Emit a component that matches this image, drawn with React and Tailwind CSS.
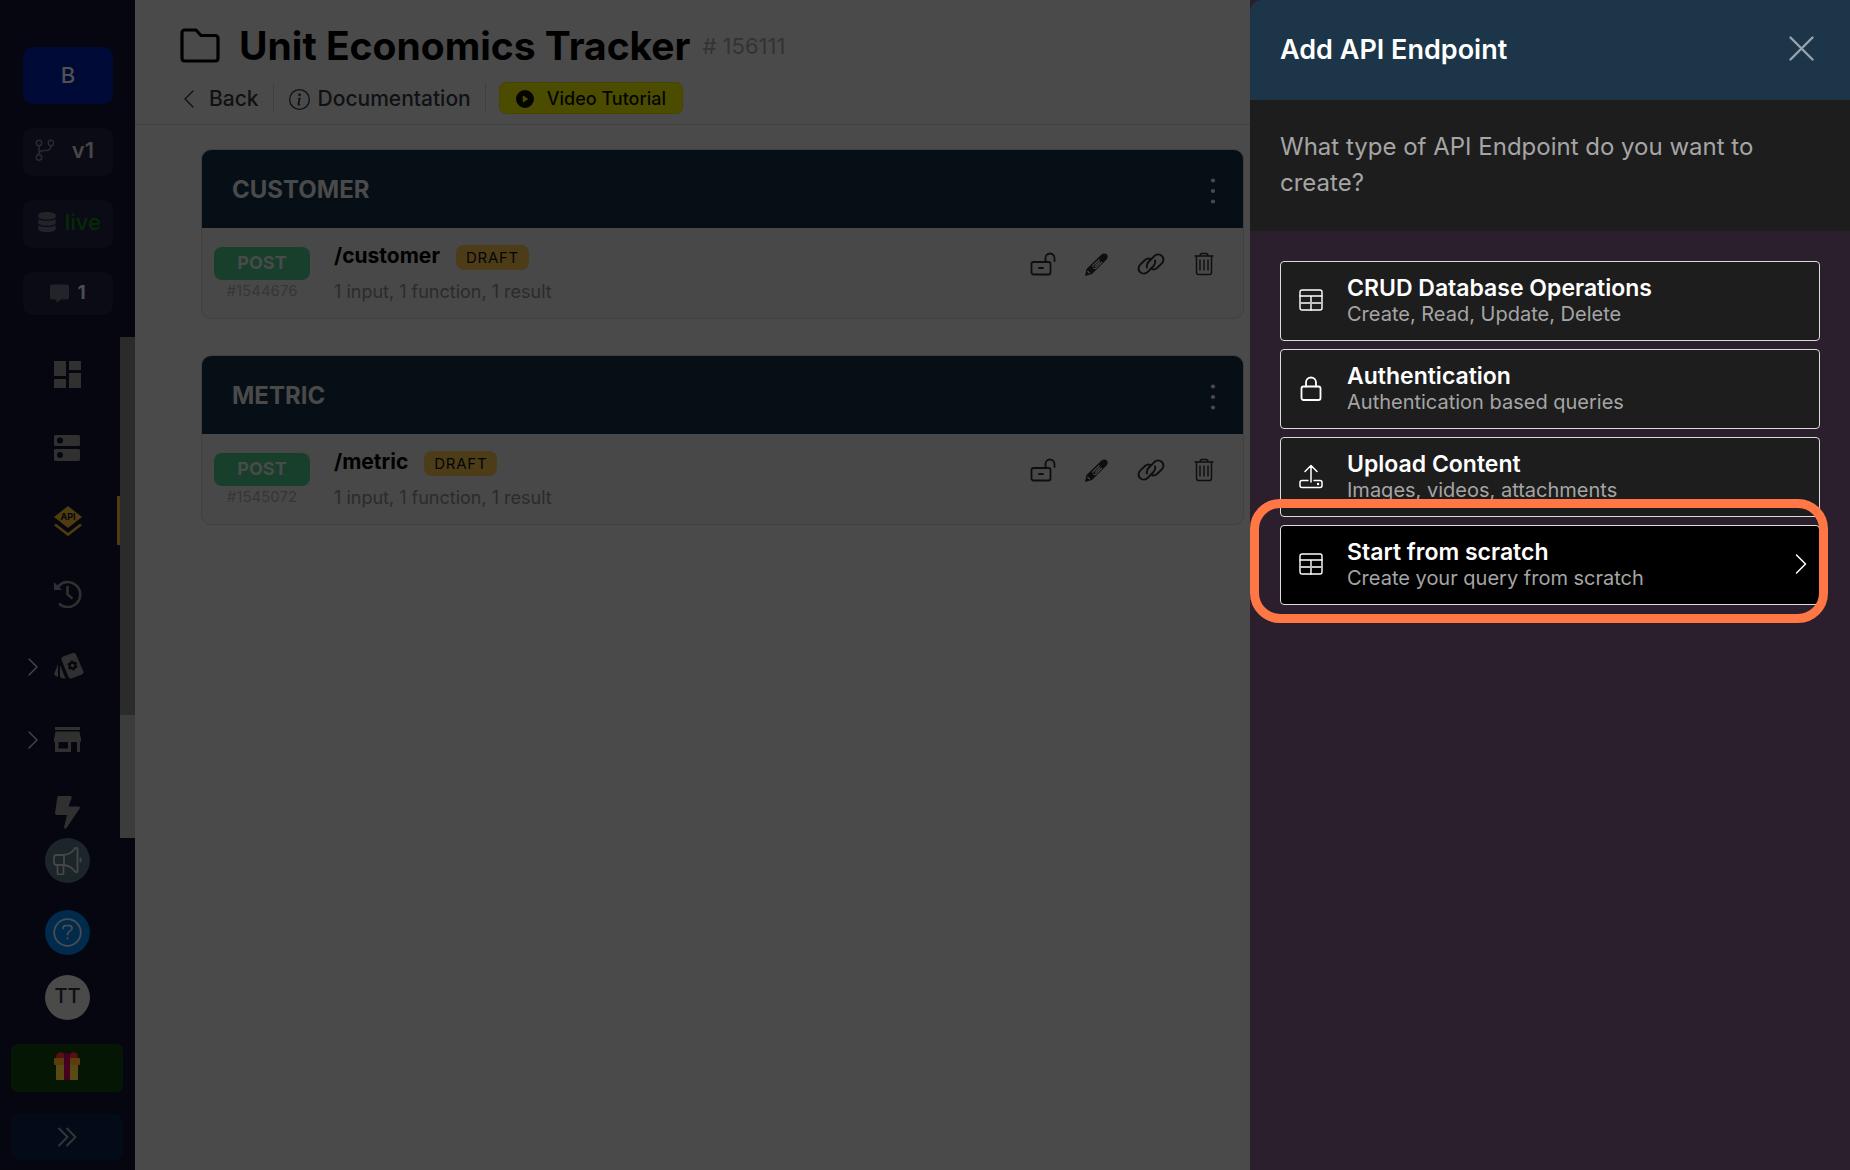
import { BsInfoCircle, BsPlayCircleFill } from "react-icons/bs";
import { FaDatabase } from "react-icons/fa";

const lines = (w) => ({ fill: "none", stroke: "currentColor", strokeWidth: w, strokeLinecap: "round", strokeLinejoin: "round" });

const Svg = ({ w = 24, h = w, sw = 1.5, children, ...rest }) => (
  <svg width={w} height={h} viewBox={`0 0 ${w} ${h}`} aria-hidden="true" {...lines(sw)} {...rest}>{children}</svg>
);

const Branch = () => (
  <Svg w={19} h={22}>
    <circle cx="4" cy="4" r="2.7" /><circle cx="16" cy="4" r="2.7" /><circle cx="4" cy="18.5" r="2.7" />
    <path d="M4 7v9M16 7c0 3-1.5 4.500-5 4.500H9c-3 0-5 1-5 4" />
  </Svg>
);
const Chat = () => (
  <svg width="19" height="19" viewBox="0 0 19 19" fill="currentColor" aria-hidden="true"><path d="M2 .5h15a2 2 0 0 1 2 2V13.500a2 2 0 0 1-2 2h-6L6.500 19v-3.500H2a2 2 0 0 1-2-2v-11a2 2 0 0 1 2-2z" /></svg>
);
const Dashboard = () => (
  <svg width="27" height="27" viewBox="0 0 27 27" fill="currentColor" aria-hidden="true"><path d="M0 0h12v15H0zM15 0h12v9H15zM0 18h12v9H0zM15 12h12v15H15z" /></svg>
);
const Dns = () => (
  <svg width="27" height="27" viewBox="0 0 27 27" fill="currentColor" fillRule="evenodd" aria-hidden="true"><path d="M1 1h24l1 1v9l-1 1H1l-1-1V2zM6 3.500a3 3 0 1 0 0 6 3 3 0 0 0 0-6zM1 15h24l1 1v10l-1 1H1l-1-1V16zM6 18a3 3 0 1 0 0 6 3 3 0 0 0 0-6z" /></svg>
);
const Api = () => (
  <svg width="28" height="30" viewBox="0 0 28 30" aria-hidden="true">
    <path d="M14 0 28 11 14 22 0 11z" fill="currentColor" />
    <path d="M1 18.500 14 28.500 27 18.500" fill="none" stroke="currentColor" strokeWidth="2.7" />
    <text x="14" y="14" textAnchor="middle" fontSize="9" fontWeight="700" fill="#05060f">API</text>
  </svg>
);
const History = () => (
  <svg width="28" height="28" viewBox="0 0 28 28" fill="none" stroke="currentColor" aria-hidden="true">
    <path d="M3.800 7A12.500 12.500 0 1 1 5 23.500" strokeWidth="2.6" /><path d="M13.500 6v8.500l5 4" strokeWidth="2.6" /><path d="M0 2v8h8z" fill="currentColor" stroke="none" />
  </svg>
);
const Cards = () => (
  <svg width="30" height="27" viewBox="0 0 30 27" fill="currentColor" className="shrink-0" aria-hidden="true">
    <path d="M9 3.500 19 0q2-.5 3 1.500l7.500 17q.5 2-1.500 3L17.500 25.500q-2 .5-3-1.500L7.500 7q-.5-2.500 1.500-3.500zM6 12l5.500 13.500H9.500Q6.500 25.500 6 23zM4 11v13L1 22.500Q-.5 21.500.500 20z" />
    <circle cx="18.500" cy="12.500" r="2.9" fill="none" stroke="#05060f" strokeWidth="2.2" /><circle cx="18.500" cy="12.500" r="4.400" fill="none" stroke="#05060f" strokeWidth="1.3" strokeDasharray="2.3" />
  </svg>
);
const Store = () => (
  <svg width="27" height="25" viewBox="0 0 27 25" fill="currentColor" fillRule="evenodd" aria-hidden="true"><path d="M1 0h25v3H1zM1.500 4.500h24L27 12v3h-1v10h-3V15h-6v10H1V15H0v-3zM4.500 15v6.500H14V15z" /></svg>
);
const Bolt = () => (
  <svg width="27" height="33" viewBox="-1 0 27 33" fill="currentColor" aria-hidden="true"><path d="M4 0h11.500q1.600.3 1.200 1.800L13.500 10.500H24q1.500.6.700 2L11.500 32q-1.600 1.500-2.500-.5L12 19H1.500Q0 18.500 0 17L2.300 1.500Q2.600.2 4 0z" /></svg>
);
const Megaphone = () => (
  <Svg w={29} h={28} sw={1.8}>
    <path d="M11 8H3.500Q1 8 1 10.500v5Q1 18 3.500 18H11zM11 8Q18 7 22 1.500q1.500-1.500 2.500 0v23q-1 1.500-2.500 0Q18 19 11 18M4.500 18v8q0 1.500 1.500 1.500h3q1.500 0 1.500-1.500v-8" /><path d="M27.500 11.500v3" />
  </Svg>
);
const Help = () => (
  <Svg w={29} h={29} sw={1.8}><circle cx="14.500" cy="14.500" r="13.300" /><path d="M10 10.500q0-2.800 2.500-2.800h4q2.500 0 2.500 2.500 0 2-2.200 3-2.300 1-2.300 3.300M14.500 20v.6" /></Svg>
);
const Gift = () => (
  <svg width="26" height="28" viewBox="0 0 26 28" aria-hidden="true">
    <circle cx="6.500" cy="4.500" r="4.300" fill="#591014" /><circle cx="19.500" cy="4.500" r="4.300" fill="#591014" />
    <rect x="2" y="11" width="22" height="17" rx="1" fill="#594a14" /><rect y="6" width="26" height="7" rx="1" fill="#5c3c0e" /><path d="M10 2q3-2 6 0v26h-6z" fill="#43001f" />
  </svg>
);
const DoubleChevron = () => <Svg w={20} h={20} sw={2}><path d="m2 1.500 8.500 8.500L2 18.500M10 1.500l8.500 8.500-8.500 8.500" /></Svg>;
const Unlock = () => (
  <Svg w={26} h={24} sw={1.8}><rect x="1.500" y="10" width="19" height="12.500" rx="2" /><path d="M15.500 10V6a4.500 4.500 0 0 1 9 0v3M9 16h4" /></Svg>
);
const Pencil = () => (
  <svg width="23" height="23" viewBox="0 0 23 23" aria-hidden="true"><path d="M0 23 1.500 16 16.500 1.500Q18 0 20 .5 22.500 1 22.700 3.500 22.700 5 21.500 6.500L7 21z" fill="currentColor" /><path d="M2.500 18 5 20.300M14.500 6.500l-6.500 6v2M17 9l-6.500 6.500h-2M15 8.500l-5 5" stroke="#484848" strokeWidth="1.1" fill="none" /></svg>
);
const LinkIcon = () => (
  <Svg w={28} h={22} sw={1.9}><path d="M10 14.500q-.8-3 1.500-5.500L17 3.300q3-3 6.500-1.300 3.500 2 2.800 5.500-.3 1.700-1.500 2.900L20 15q-2.500 2-5 1.200M18 7.500q.8 3-1.500 5.500L11 18.700q-3 3-6.500 1.300Q1 18 1.700 14.500q.3-1.700 1.500-2.900L8 7q2.500-2 5-1.200" /></Svg>
);
const Trash = () => (
  <Svg w={20} h={24} sw={1.4}><path d="M1 4h18M2.500 4v16.500Q2.500 22.500 4.500 22.500h11q2 0 2-2V4M6 4q0-2.500 2-2.500h4q2 0 2 2.500M6 8v10M10 8v10M14 8v10" /></Svg>
);
const FolderIcon = () => <Svg w={40} h={36} sw={3.2}><path d="M2 30V5q0-3 3-3h11l5 5.500h14q3 0 3 3V30q0 3-3 3H5q-3 0-3-3z" /></Svg>;
const TableIcon = () => (
  <Svg w={24} h={22} sw={1.4}><rect x="1" y="1" width="22" height="20" rx="2" /><path d="M1 7h22M12 7v14" /><path d="M1 14h22" strokeWidth="2" stroke="#c4c4c4" /></Svg>
);
const LockIcon = () => (
  <Svg w={24} h={25} sw={1.8}><rect x="2.500" y="10.500" width="19" height="13.500" rx="2" /><path d="M7 10.500V6.500a5 5 0 0 1 10 0v4" /></Svg>
);
const UploadIcon = () => (
  <Svg w={24} h={25} sw={1.5}><path d="M12 18V1.500M6 7.500l6-6 6 6M9 16.500H3q-2 0-2 2v3q0 2 2 2h18q2 0 2-2v-3q0-2-2-2h-6" /><path d="M19 20h.1" strokeWidth="2.4" /></Svg>
);

const NAV = [
  { label: "Dashboard", icon: Dashboard },
  { label: "Database", icon: Dns },
  { label: "API", icon: Api, active: true },
  { label: "History", icon: History },
  { label: "Library", icon: Cards, expandable: true },
  { label: "Marketplace", icon: Store, expandable: true },
  { label: "Actions", icon: Bolt },
];

function Sidebar() {
  return (
    <aside className="flex w-[135px] shrink-0 flex-col items-center bg-[#05060f] text-[#303030]">
      <div className="flex w-full flex-col gap-6 pt-[47px] pr-[22px] pb-[22px] pl-[23px]">
        <button className="h-[57px] rounded-[10px] bg-[#000a37] text-[22px] font-medium text-[#51514f]">B</button>
        <button className="flex h-12 items-center justify-between rounded-[10px] bg-[#0a0b15] pr-[19px] pb-1 pl-3 text-[22px] font-semibold text-[#474744]"><span className="text-[#2a2b30]"><Branch /></span>v1</button>
        <button className="flex h-12 items-center justify-between rounded-[10px] bg-[#0a0b15] px-3 pb-1 pl-3.5 text-[22px] font-medium text-[#052a08]"><FaDatabase className="text-xl text-[#232429]" />live</button>
        <button className="flex h-[43px] items-center justify-center gap-2 rounded-[10px] bg-[#0a0b15] text-[19px] font-bold text-[#4d4d4c]"><span className="text-[#232429]"><Chat /></span>1</button>
      </div>
      <div className="flex h-[501px] w-full shrink-0 overflow-hidden">
        <nav className="flex flex-1 flex-col pt-px">
          {NAV.map(({ label, icon: Icon, active, expandable }) => (
            <a key={label} href="#" aria-label={label} className={`flex h-[73px] shrink-0 items-center ${active ? "text-[#4f3c10]" : ""}`}>
              <span className="flex w-[54px] justify-end pr-4">
                {expandable && <Svg w={10} h={18} sw={1.3} className="text-[#4a4a4a]"><path d="m1 1 8 8-8 8" /></Svg>}
              </span>
              <span className="flex w-[30px]"><Icon /></span>
              {active && <span className="ml-auto h-[49px] w-[3px] bg-[#4f3c10]" />}
            </a>
          ))}
        </nav>
        <div className="w-[15px] bg-[#3b3d3c]"><div className="h-[378px] bg-[#2b2b2b]" /></div>
      </div>
      <button aria-label="Announcements" className="flex size-[45px] shrink-0 items-center justify-center rounded-full bg-[#1c2529] text-[#454748]"><Megaphone /></button>
      <button aria-label="Help" className="mt-[27px] flex size-[45px] shrink-0 items-center justify-center rounded-full bg-[#002b4d] text-[#4a4c4f]"><Help /></button>
      <button className="mt-5 size-[45px] shrink-0 rounded-full bg-[#4a4a4a] pb-1 text-xl font-medium text-[#0d0f12]">TT</button>
      <button aria-label="Rewards" className="mt-6 mr-px flex h-12 w-28 shrink-0 items-center justify-center rounded-md bg-[#051605] pb-1"><Gift /></button>
      <button aria-label="Expand sidebar" className="mt-[22px] mr-px flex h-[46px] w-28 shrink-0 items-center justify-center rounded-lg bg-[#030a18] text-[#343538]"><DoubleChevron /></button>
    </aside>
  );
}

function Header() {
  return (
    <header className="h-[125px] border-b border-[#404040] pt-5 pl-[45px]">
      <div className="flex items-center">
        <FolderIcon />
        <h1 className="ml-[19px] text-[39px] leading-[52px] font-bold text-black">Unit Economics Tracker</h1>
        <span className="ml-3 text-[22px] text-[#333333]"># 156111</span>
      </div>
      <div className="mt-2.5 flex items-center text-[21px] font-medium text-[#0f1113]">
        <a href="#" className="flex h-[30px] items-center gap-[15px] border-r border-[#404040] pt-0.5 pr-[14px] pl-[3px]">
          <Svg w={11} h={18} sw={1.3}><path d="M10 1 2 9l8 8" /></Svg>Back
        </a>
        <a href="#" className="flex h-[30px] items-center gap-2 border-r border-[#404040] pt-0.5 pr-[14px] pl-[15px]"><BsInfoCircle />Documentation</a>
        <a href="#" className="ml-[13px] flex h-8 items-center gap-[13px] rounded-[7px] border border-[#454500] bg-[#4c4c00] px-4 pt-0.5 text-lg font-medium text-[#050500]"><BsPlayCircleFill />Video Tutorial</a>
      </div>
    </header>
  );
}

const ACTIONS = [["Unlock", Unlock], ["Edit", Pencil], ["Copy link", LinkIcon], ["Delete", Trash]];

function Group({ title, path, id }) {
  return (
    <section className="overflow-hidden rounded-[10px] border border-[#404040] bg-[#484848]">
      <div className="flex h-[78px] items-center justify-between bg-[#070f16] pr-[22px] pl-[30px]">
        <h2 className="pt-px text-2xl font-bold text-[#4a4a4a]">{title}</h2>
        <button aria-label="More options" className="pt-1 text-[#4a4a4a]">
          <svg width="16" height="26" viewBox="0 0 16 26" fill="currentColor" aria-hidden="true"><circle cx="8" cy="2.500" r="2.1" /><circle cx="8" cy="13" r="2.1" /><circle cx="8" cy="23.500" r="2.1" /></svg>
        </button>
      </div>
      <div className="flex h-[90px] pr-[29px] pl-3">
        <div className="w-24 pt-[19px] text-center">
          <div className="h-[33px] rounded-lg bg-[#173f2c] text-lg leading-8 font-bold text-[#4a4a4a]">POST</div>
          <div className="text-[15px] leading-[22px] text-[#363636]">#{id}</div>
        </div>
        <div className="ml-6 pt-3">
          <div className="flex items-center gap-4">
            <h3 className="text-[21px] leading-8 font-bold text-black">{path}</h3>
            <span className="mt-[3px] rounded-lg bg-[#4c3d18] px-2.5 text-[15px] leading-[25px] tracking-wider text-[#050505]">DRAFT</span>
          </div>
          <p className="mt-1 text-lg leading-8 text-[#2b2b2b]">1 input, 1 function, 1 result</p>
        </div>
        <div className="ml-auto flex h-[72px] items-center gap-[29px] text-[#0d0e10]">
          {ACTIONS.map(([label, Icon]) => <button key={label} aria-label={label}><Icon /></button>)}
        </div>
      </div>
    </section>
  );
}

const OPTIONS = [
  { title: "CRUD Database Operations", sub: "Create, Read, Update, Delete", icon: TableIcon },
  { title: "Authentication", sub: "Authentication based queries", icon: LockIcon },
  { title: "Upload Content", sub: "Images, videos, attachments", icon: UploadIcon },
  { title: "Start from scratch", sub: "Create your query from scratch", icon: TableIcon, selected: true },
];

function Drawer() {
  return (
    <aside role="dialog" aria-labelledby="drawer-title" className="w-[600px] shrink-0 bg-[#2b1f2d]">
      <div className="flex h-[100px] items-center justify-between rounded-tl-xl bg-[#1c3548] pr-9 pl-[30px]">
        <h2 id="drawer-title" className="text-[27px] font-semibold text-white">Add API Endpoint</h2>
        <button aria-label="Close" className="pb-1 text-[#99a3ab]"><Svg w={25} h={25} sw={2.4}><path d="m1.500 1.500 22 22M23.500 1.500l-22 22" /></Svg></button>
      </div>
      <p className="h-[131px] bg-[#1d1d1d] px-[30px] pt-[29px] text-2xl leading-9 text-[#a5a5a5]">What type of API Endpoint do you want to create?</p>
      <div className="flex flex-col gap-2 px-[30px] pt-[30px]">
        {OPTIONS.map(({ title, sub, icon: Icon, selected }) => (
          <div key={title} className="relative">
            <button className={`flex h-20 w-full items-center rounded border border-[#dcdcdc] pr-3 pb-0.5 pl-[18px] text-left text-white ${selected ? "bg-black" : "bg-[#1d1d1d]"}`}>
              <Icon />
              <span className="ml-6 flex flex-1 flex-col">
                <span className="text-[23px] leading-7 font-semibold">{title}</span>
                <span className="text-xl leading-6 text-[#a5a5a5]">{sub}</span>
              </span>
              {selected && <Svg w={12} h={20} sw={1.5}><path d="m1.500 1 9 9-9 9" /></Svg>}
            </button>
            {selected && <span className="pointer-events-none absolute -top-[26px] -right-2 -bottom-[18px] -left-[30px] rounded-[30px] border-[9px] border-[#ff7744]" />}
          </div>
        ))}
      </div>
    </aside>
  );
}

export default function App() {
  return (
    <div className="flex min-h-screen bg-[#4a4a4a] font-['Inter',sans-serif]">
      <Sidebar />
      <main className="min-w-0 flex-1">
        <Header />
        <div className="flex flex-col gap-9 pt-6 pr-1.5 pl-[66px]">
          <Group title="CUSTOMER" path="/customer" id="1544676" />
          <Group title="METRIC" path="/metric" id="1545072" />
        </div>
      </main>
      <Drawer />
    </div>
  );
}
